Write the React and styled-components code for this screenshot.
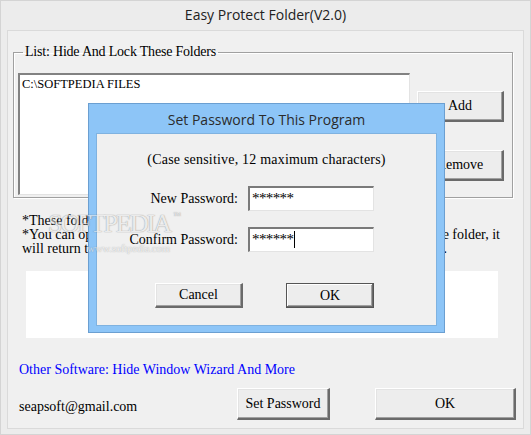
import styled, { createGlobalStyle } from 'styled-components'

const GlobalStyle = createGlobalStyle`
  html, body {
    margin: 0;
    padding: 0;
    background: #ececec;
  }
`

const serif = `"Liberation Serif", "Times New Roman", serif`
const ui = `"Open Sans", "Noto Sans", sans-serif`

const Window = styled.div`
  position: relative;
  box-sizing: border-box;
  width: 531px;
  height: 435px;
  background: #ececec;
  border: 1px solid #d4d4d4;
  display: flex;
  flex-direction: column;
  font-family: ${serif};
  font-size: 14px;
  color: #000;
  overflow: hidden;
`

const TitleBar = styled.div`
  height: 29px;
  line-height: 28px;
  text-align: center;
  font-family: ${ui};
  font-size: 14px;
  color: #222;
`

const Panel = styled.div`
  flex: 1;
  margin: 0 6px 5px 6px;
  border: 1px solid #dadada;
  background: #f0f0f0;
  display: flex;
  flex-direction: column;
`

const GroupBox = styled.fieldset`
  margin: 13px 10px 0 5px;
  padding: 13px 8px 2px 4px;
  border: 1px solid #a0a0a0;
  box-shadow: 1px 1px 0 #fff, inset 1px 1px 0 #fff;
  min-inline-size: 0;
`

const Legend = styled.legend`
  padding: 0 2px;
  margin-left: 5px;
  line-height: 16px;
  letter-spacing: -0.2px;
`

const GroupRow = styled.div`
  display: flex;
  gap: 7px;
`

const ListBox = styled.div`
  box-sizing: border-box;
  width: 392px;
  height: 122px;
  background: #fff;
  border-style: solid;
  border-width: 2px 1px 1px 2px;
  border-color: #828282 #e3e3e3 #e3e3e3 #828282;
  padding: 1px 2px;
  line-height: 16px;
  font-size: 12.5px;
`

const ButtonColumn = styled.div`
  display: flex;
  flex-direction: column;
  gap: 28px;
  padding-top: 18px;
`

const Button = styled.button`
  box-sizing: border-box;
  width: ${p => p.$w || 87}px;
  height: ${p => p.$h || 31}px;
  padding: 0;
  font-family: ${serif};
  font-size: 14px;
  color: #000;
  background: #ededed;
  border-style: solid;
  border-width: 1px 2px 2px 1px;
  border-color: #fff #6a6a6a #6a6a6a #fff;
  box-shadow: inset -1px -1px 0 #a0a0a0, inset 1px 1px 0 #e3e3e3;
  ${p => p.$default && `
    border: 1px solid #555;
    box-shadow: inset -1px -1px 0 #6a6a6a, inset 1px 1px 0 #fff, inset -2px -2px 0 #a0a0a0;
  `}
`

const Notes = styled.div`
  margin: 16px 0 0 14px;
  line-height: 14px;
  white-space: nowrap;
`

const NoteLine = styled.div`
  display: flex;
  justify-content: space-between;
  width: ${p => (p.$w ? `${p.$w}px` : 'auto')};
`

const WhiteBox = styled.div`
  height: 67px;
  margin: 15px 25px 0 18px;
  background: #fff;
`

const Link = styled.div`
  margin: 24px 0 0 11px;
  color: #0000ff;
  line-height: 16px;
`

const BottomRow = styled.div`
  display: flex;
  align-items: center;
  margin: 10px 0 0 11px;
`

const Email = styled.div`
  width: 218px;
  padding-top: 6px;
`

const Spacer = styled.div`
  width: 45px;
`

const Dialog = styled.div`
  position: absolute;
  left: 87px;
  top: 102px;
  box-sizing: border-box;
  width: 357px;
  height: 230px;
  background: #8dc5f7;
  border: 1px solid #6b9fd1;
  display: flex;
  flex-direction: column;
  padding: 0 7px 6px 7px;
`

const DialogTitle = styled.div`
  height: 29px;
  line-height: 31px;
  text-align: center;
  font-family: ${ui};
  font-size: 14px;
  color: #2b2b2b;
`

const DialogBody = styled.div`
  flex: 1;
  background: #f0f0f0;
  border: 1px solid #7fb2e0;
  display: flex;
  flex-direction: column;
`

const Hint = styled.div`
  text-align: center;
  margin-top: 18px;
  line-height: 16px;
  letter-spacing: 0.2px;
`

const FormGrid = styled.div`
  display: grid;
  grid-template-columns: 141px 126px;
  column-gap: 10px;
  row-gap: 16px;
  align-items: center;
  margin-top: 18px;
`

const Label = styled.div`
  text-align: right;
`

const Field = styled.div`
  box-sizing: border-box;
  height: 25px;
  background: #fff;
  border-style: solid;
  border-width: 2px 1px 1px 2px;
  border-color: #7a7a7a #e3e3e3 #e3e3e3 #7a7a7a;
  padding: 2px 2px;
  line-height: 16px;
  font-size: 15px;
  letter-spacing: -0.6px;
`

const Caret = styled.span`
  display: inline-block;
  width: 1px;
  height: 17px;
  background: #000;
  vertical-align: -4px;
  margin-left: 1px;
`

const DialogButtons = styled.div`
  display: flex;
  gap: 43px;
  margin: 31px 0 0 58px;
`

const Watermark = styled.div`
  position: absolute;
  left: 47px;
  top: 208px;
  font-family: ${serif};
  font-size: 26px;
  letter-spacing: -2px;
  color: rgba(255, 255, 255, 0.85);
  text-shadow: 0 0 1px rgba(100, 100, 100, 0.9), 0 0 1px rgba(100, 100, 100, 0.7);
  opacity: 0.6;
  pointer-events: none;
  sup {
    font-size: 8px;
    letter-spacing: 0;
    margin-left: 3px;
    vertical-align: 14px;
  }
`

const WatermarkUrl = styled.div`
  position: absolute;
  left: 86px;
  top: 241px;
  font-family: ${serif};
  font-size: 11px;
  letter-spacing: -0.3px;
  color: rgba(255, 255, 255, 0.85);
  text-shadow: 0 0 1px rgba(100, 100, 100, 0.9);
  opacity: 0.6;
  pointer-events: none;
`

export default function App() {
  return (
    <>
      <GlobalStyle />
      <Window>
        <TitleBar>Easy Protect Folder(V2.0)</TitleBar>
        <Panel>
          <GroupBox>
            <Legend>List: Hide And Lock These Folders</Legend>
            <GroupRow>
              <ListBox>C:\SOFTPEDIA FILES</ListBox>
              <ButtonColumn>
                <Button>Add</Button>
                <Button>Remove</Button>
              </ButtonColumn>
            </GroupRow>
          </GroupBox>
          <Notes>
            <NoteLine>*These folders are hidden and locked now.</NoteLine>
            <NoteLine $w={478}>
              <span>*You can open this program again to unlock and open</span>
              <span>the folder, it</span>
            </NoteLine>
            <NoteLine $w={425}>
              <span>will return to the hidden and</span>
              <span>locked state automatically.</span>
            </NoteLine>
          </Notes>
          <WhiteBox />
          <Link>Other Software: Hide Window Wizard And More</Link>
          <BottomRow>
            <Email>seapsoft@gmail.com</Email>
            <Button $w={93} $h={32}>Set Password</Button>
            <Spacer />
            <Button $w={141} $h={32}>OK</Button>
          </BottomRow>
        </Panel>

        <Dialog>
          <DialogTitle>Set Password To This Program</DialogTitle>
          <DialogBody>
            <Hint>(Case sensitive, 12 maximum characters)</Hint>
            <FormGrid>
              <Label>New Password:</Label>
              <Field>******</Field>
              <Label>Confirm Password:</Label>
              <Field>******<Caret /></Field>
            </FormGrid>
            <DialogButtons>
              <Button $w={88} $h={25}>Cancel</Button>
              <Button $w={88} $h={25} $default>OK</Button>
            </DialogButtons>
          </DialogBody>
        </Dialog>

        <Watermark>SOFTPEDIA<sup>™</sup></Watermark>
        <WatermarkUrl>www.softpedia.com</WatermarkUrl>
      </Window>
    </>
  )
}
